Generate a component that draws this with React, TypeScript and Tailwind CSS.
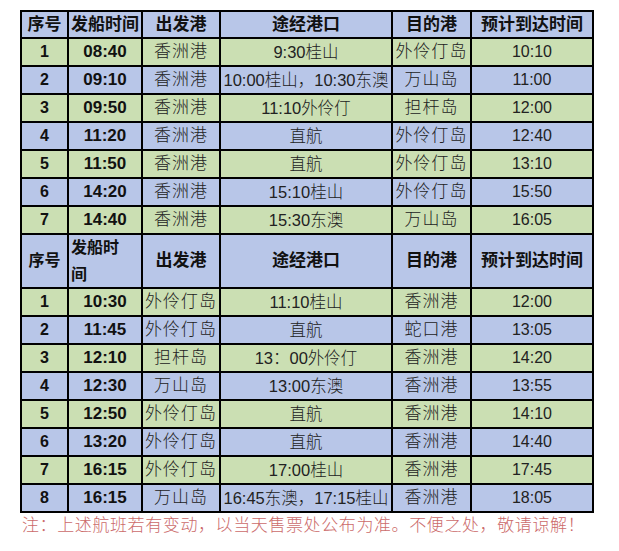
type Row = [string, string, string, string, string, string];

const firstRows: Row[] = [
  ["1", "08:40", "香洲港", "9:30桂山", "外伶仃岛", "10:10"],
  ["2", "09:10", "香洲港", "10:00桂山，10:30东澳", "万山岛", "11:00"],
  ["3", "09:50", "香洲港", "11:10外伶仃", "担杆岛", "12:00"],
  ["4", "11:20", "香洲港", "直航", "外伶仃岛", "12:40"],
  ["5", "11:50", "香洲港", "直航", "外伶仃岛", "13:10"],
  ["6", "14:20", "香洲港", "15:10桂山", "外伶仃岛", "15:50"],
  ["7", "14:40", "香洲港", "15:30东澳", "万山岛", "16:05"],
];

const secondRows: Row[] = [
  ["1", "10:30", "外伶仃岛", "11:10桂山", "香洲港", "12:00"],
  ["2", "11:45", "外伶仃岛", "直航", "蛇口港", "13:05"],
  ["3", "12:10", "担杆岛", "13：00外伶仃", "香洲港", "14:20"],
  ["4", "12:30", "万山岛", "13:00东澳", "香洲港", "13:55"],
  ["5", "12:50", "外伶仃岛", "直航", "香洲港", "14:10"],
  ["6", "13:20", "外伶仃岛", "直航", "香洲港", "14:40"],
  ["7", "16:15", "外伶仃岛", "17:00桂山", "香洲港", "17:45"],
  ["8", "16:15", "万山岛", "16:45东澳，17:15桂山", "香洲港", "18:05"],
];

const blue = "bg-[#b8c6e8]";
const green = "bg-[#cbdfb3]";

function DataRow({ row, index }: { row: Row; index: number }) {
  const bg = index % 2 === 0 ? green : blue;
  return (
    <>
      <div className={`${bg} h-[26px] flex items-center justify-center text-[16px] font-bold`}>{row[0]}</div>
      <div className={`${bg} h-[26px] flex items-center justify-center text-[17px] font-bold`}>{row[1]}</div>
      <div className={`${bg} h-[26px] flex items-center justify-center text-[17px] font-light tracking-[1px] whitespace-nowrap text-[#222]`}>{row[2]}</div>
      <div className={`${bg} h-[26px] flex items-center justify-center text-[16.5px] font-light whitespace-nowrap text-[#222]`}>{row[3]}</div>
      <div className={`${bg} h-[26px] flex items-center justify-center text-[17px] font-light tracking-[1px] whitespace-nowrap text-[#222]`}>{row[4]}</div>
      <div className={`${bg} h-[26px] flex items-center justify-center text-[16px] text-[#222]`}>{row[5]}</div>
    </>
  );
}

export default function App() {
  return (
    <div className="w-[619px] h-[551px] bg-white pt-[10px] pl-[20px] font-['Liberation_Sans','Noto_Sans_CJK_SC',sans-serif] text-[#111]">
      <div className="w-fit grid grid-cols-[45px_72px_76px_170px_77px_120px] gap-[2px] bg-black p-[2px]">
        <div className={`${blue} h-[25px] flex items-center justify-center text-[17px] font-bold`}>序号</div>
        <div className={`${blue} h-[25px] flex items-center justify-center text-[17px] font-bold`}>发船时间</div>
        <div className={`${blue} h-[25px] flex items-center justify-center text-[17px] font-bold`}>出发港</div>
        <div className={`${blue} h-[25px] flex items-center justify-center text-[17px] font-bold`}>途经港口</div>
        <div className={`${blue} h-[25px] flex items-center justify-center text-[17px] font-bold`}>目的港</div>
        <div className={`${blue} h-[25px] flex items-center justify-center text-[17px] font-bold`}>预计到达时间</div>

        {firstRows.map((r, i) => (
          <DataRow key={"a" + i} row={r} index={i} />
        ))}

        <div className={`${blue} h-[52px] flex items-center justify-center text-[16px] font-bold`}>序号</div>
        <div className={`${blue} h-[52px] flex flex-col justify-center pl-[2px] text-[16px] font-bold leading-[27px]`}>
          <span>发船时</span>
          <span>间</span>
        </div>
        <div className={`${blue} h-[52px] flex items-center justify-center text-[17px] font-bold`}>出发港</div>
        <div className={`${blue} h-[52px] flex items-center justify-center text-[17px] font-bold`}>途经港口</div>
        <div className={`${blue} h-[52px] flex items-center justify-center text-[17px] font-bold`}>目的港</div>
        <div className={`${blue} h-[52px] flex items-center justify-center text-[17px] font-bold`}>预计到达时间</div>

        {secondRows.map((r, i) => (
          <DataRow key={"b" + i} row={r} index={i} />
        ))}
      </div>
      <div className="pl-[2px] h-[26px] flex items-center text-[17px] font-light tracking-[0.6px] whitespace-nowrap text-[#cc6b6b] font-['Liberation_Serif','Noto_Sans_CJK_SC',serif]">
        注：上述航班若有变动，以当天售票处公布为准。不便之处，敬请谅解！
      </div>
    </div>
  );
}
